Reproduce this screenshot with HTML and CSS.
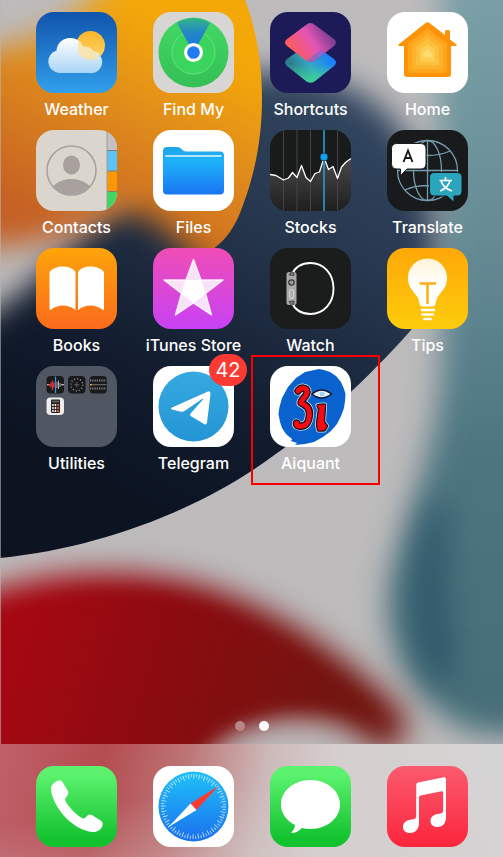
FILE: index.html
```html
<!DOCTYPE html>
<html lang="en">
<head>
<meta charset="utf-8">
<meta name="viewport" content="width=device-width, initial-scale=1">
<title>Home Screen</title>
<link rel="stylesheet" href="styles.css">
</head>
<body>
<div class="screen">
  <svg class="wallpaper" viewBox="0 0 503 857" preserveAspectRatio="none" color-interpolation-filters="sRGB" aria-hidden="true">
    <defs>
      <filter id="b8" filterUnits="userSpaceOnUse" x="-150" y="-150" width="800" height="1150"><feGaussianBlur stdDeviation="9"/></filter>
      <filter id="b14" filterUnits="userSpaceOnUse" x="-150" y="-150" width="800" height="1150"><feGaussianBlur stdDeviation="15"/></filter>
      <filter id="b24" filterUnits="userSpaceOnUse" x="-150" y="-150" width="800" height="1150"><feGaussianBlur stdDeviation="24"/></filter>
      <filter id="b1" filterUnits="userSpaceOnUse" x="-150" y="-150" width="800" height="1150"><feGaussianBlur stdDeviation="1"/></filter>
      <linearGradient id="teal" x1="0" y1="0" x2="0" y2="1"><stop offset="0" stop-color="#7fa3ab"/><stop offset=".4" stop-color="#638a93"/><stop offset=".65" stop-color="#4d7580"/><stop offset="1" stop-color="#466e78"/></linearGradient>
      <linearGradient id="navy" gradientUnits="userSpaceOnUse" x1="370" y1="90" x2="150" y2="500"><stop offset="0" stop-color="#344862"/><stop offset=".4" stop-color="#24344b"/><stop offset=".75" stop-color="#121c2e"/><stop offset="1" stop-color="#0c1422"/></linearGradient>
      <linearGradient id="orange" gradientUnits="userSpaceOnUse" x1="200" y1="40" x2="90" y2="250"><stop offset="0" stop-color="#f4a808"/><stop offset=".4" stop-color="#e08c1c"/><stop offset="1" stop-color="#c45f24"/></linearGradient>
      <linearGradient id="red" gradientUnits="userSpaceOnUse" x1="20" y1="640" x2="330" y2="740"><stop offset="0" stop-color="#a50812"/><stop offset=".5" stop-color="#880c10"/><stop offset="1" stop-color="#721510"/></linearGradient>
      <clipPath id="orangeEdge"><path d="M0 0H245C268 60 268 140 243 205C236 226 226 240 212 250L140 340H0Z"/></clipPath>
      <clipPath id="navyEdge"><path d="M0 0H503V250L412 329C380 365 330 416 273 456C200 510 100 548 0 558Z"/></clipPath>
    </defs>
    <rect width="503" height="857" fill="#bdbbbc"/>
    <path filter="url(#b14)" d="M444 -60H600V715C560 735 500 742 462 728C420 705 387 660 387 602C390 550 428 480 438 400C446 340 436 200 438 120Z" fill="url(#teal)"/>
    <path filter="url(#b14)" d="M432 500C412 540 402 620 425 670C440 700 458 690 450 630C444 590 446 540 445 500Z" fill="#275064" opacity=".8"/>
    <g clip-path="url(#navyEdge)">
      <path filter="url(#b14)" d="M230 75C340 60 400 105 422 170C440 230 440 260 425 400L200 650H-100V352C30 320 60 240 130 190Z" fill="url(#navy)"/>
    </g>
    <g clip-path="url(#orangeEdge)">
      <path filter="url(#b14)" d="M110 -60H350V300H235C190 255 155 205 118 212C90 226 60 252 -100 250V55C50 40 80 30 110 -60Z" fill="url(#orange)"/>
      <path filter="url(#b24)" d="M-60 -60H110L90 0L0 40H-60Z" fill="#bdbbbc" opacity=".7"/>
    </g>
    <path filter="url(#b14)" d="M-100 640C-20 575 80 568 150 575C260 588 345 655 402 710C420 745 380 760 365 740C340 712 260 705 212 748L180 800H-100Z" fill="url(#red)"/>
    <path filter="url(#b8)" d="M-60 655C20 595 100 592 150 595C230 602 320 660 375 712C380 725 365 720 350 712C300 700 250 705 205 740L160 800H-60Z" fill="url(#red)"/>
    <rect width="1" height="857" fill="#b8b6b8" opacity=".6"/>
  </svg>

  <main class="apps">
    <button class="app" type="button">
      <svg class="icon" viewBox="0 0 81 81" aria-hidden="true">
        <defs>
          <linearGradient id="w1" x2="0" y2="1"><stop stop-color="#1054ab"/><stop offset="1" stop-color="#31a0ec"/></linearGradient>
          <linearGradient id="w2" x2="0" y2="1"><stop stop-color="#fff"/><stop offset="1" stop-color="#a9d4f5"/></linearGradient>
          <linearGradient id="w3" x2="0" y2="1"><stop stop-color="#fbb52c"/><stop offset="1" stop-color="#fdd566"/></linearGradient>
          <clipPath id="w4"><circle cx="54.500" cy="33.500" r="14.500"/></clipPath>
        </defs>
        <rect width="81" height="81" fill="url(#w1)"/>
        <circle cx="54.500" cy="33.500" r="14.500" fill="url(#w3)"/>
        <path d="M23 61A11.500 11.500 0 0 1 20.500 38.500C21 31 27 26 34 26C40 26 45 29 47 35C50 34 55 35 57 39A11 11 0 0 1 53 61Z" fill="url(#w2)"/>
        <path d="M42 28C45 30 46 32 47 35C50 34 55 35 57 39C60 40 62 42 63 46L54 49L42 43Z" fill="#fbe3a4" opacity=".85" clip-path="url(#w4)"/>
      </svg>
      <span class="label">Weather</span>
    </button>
    <button class="app" type="button">
      <svg class="icon" viewBox="0 0 81 81" aria-hidden="true">
        <defs><linearGradient id="f1" x2="0" y2="1"><stop stop-color="#43d965"/><stop offset="1" stop-color="#34bf55"/></linearGradient>
        <linearGradient id="f2" x2="0" y2="1"><stop stop-color="#34b587"/><stop offset=".4" stop-color="#2389c4"/><stop offset="1" stop-color="#1e6de8"/></linearGradient></defs>
        <rect width="81" height="81" fill="#d8d5d5"/>
        <circle cx="40.500" cy="40.500" r="35" fill="url(#f1)"/>
        <circle cx="40.500" cy="40.500" r="21.500" fill="#3bd45d" stroke="#63e382" stroke-width="1"/>
        <path d="M40.500 40.500L24 11C33 4.500 48 4.500 57 11Z" fill="url(#f2)"/>
        <circle cx="40.500" cy="40.500" r="9.500" fill="#fff"/><circle cx="40.500" cy="40.500" r="6.300" fill="#1e7bf2"/>
      </svg>
      <span class="label">Find My</span>
    </button>
    <button class="app" type="button">
      <svg class="icon" viewBox="0 0 81 81" aria-hidden="true">
        <defs>
          <linearGradient id="s1" gradientUnits="userSpaceOnUse" x1="24" y1="42" x2="58" y2="20"><stop stop-color="#fb5c5c"/><stop offset=".55" stop-color="#e355b5"/><stop offset="1" stop-color="#7c3f92"/></linearGradient>
          <linearGradient id="s2" gradientUnits="userSpaceOnUse" x1="60" y1="45" x2="24" y2="60"><stop stop-color="#1b80fb"/><stop offset=".55" stop-color="#32a9c4"/><stop offset="1" stop-color="#2d7d8c"/></linearGradient>
          <linearGradient id="s3" gradientUnits="userSpaceOnUse" x1="0" y1="52" x2="0" y2="70"><stop stop-color="#3ed398" stop-opacity="0"/><stop offset="1" stop-color="#3ed398"/></linearGradient>
        </defs>
        <rect width="81" height="81" fill="#1d1b57"/>
        <path d="M36 33.500Q40.500 29 45 33.500L64 47Q68 50.500 64 54L45 69Q40.500 72 36 69L17 54Q13 50.500 17 47Z" fill="url(#s2)"/>
        <path d="M36 33.500Q40.500 29 45 33.500L64 47Q68 50.500 64 54L45 69Q40.500 72 36 69L17 54Q13 50.500 17 47Z" fill="url(#s3)"/>
        <path d="M36 13Q40.500 9 45 13L64 27Q68 30.500 64 34L45 48.500Q40.500 52 36 48.500L17 34Q13 30.500 17 27Z" fill="url(#s1)"/>
        <path d="M51 37.500L57 42L45 49Q40.500 52 36 49Z" fill="#3c72e0" opacity=".45"/>
      </svg>
      <span class="label">Shortcuts</span>
    </button>
    <button class="app" type="button">
      <svg class="icon" viewBox="0 0 81 81" aria-hidden="true">
        <rect width="81" height="81" fill="#fff"/>
        <path d="M38.500 11Q40.500 9.300 42.500 11L58 23V19.500Q58 18 59.500 18H61.500Q63 18 63 19.500V27.500L69.500 32.500Q70 34 68.500 34H64V62Q64 65 61 65H20Q17 65 17 62V34H12Q10.500 34 11.500 32.500Z" fill="#fd9309"/>
        <path d="M40.500 16.500L60 31.500V58Q60 61 57 61H24Q21 61 21 58V31.500Z" fill="#fda51c"/>
        <path d="M40.500 21.500L56 33.500V54.500Q56 57.500 53 57.500H28Q25 57.500 25 54.500V33.500Z" fill="#fdb22b"/>
        <path d="M40.500 26.500L52 35.500V51Q52 53.500 49.500 53.500H31.500Q29 53.500 29 51V35.500Z" fill="#fdc03c"/>
        <path d="M40.500 32L48 38V47.500Q48 49.500 46 49.500H35Q33 49.500 33 47.500V38Z" fill="#fecd52"/>
        <path d="M40.500 37L45 41V45H36V41Z" fill="#fedd70"/>
      </svg>
      <span class="label">Home</span>
    </button>

    <button class="app" type="button">
      <svg class="icon" viewBox="0 0 81 81" aria-hidden="true">
        <rect width="81" height="81" fill="#dad6cd"/>
        <rect x="71" width="10" height="20.500" fill="#c4c1c4"/><rect x="71" y="20.500" width="10" height="20.500" fill="#5bc3f6"/><rect x="71" y="41" width="10" height="20.500" fill="#fd9804"/><rect x="71" y="61.500" width="10" height="20" fill="#41d663"/>
        <path d="M71 20.500H81M71 41H81M71 61.500H81" stroke="#7c8072" stroke-width="1"/><path d="M71 0V81" stroke="#a09c98" stroke-width="1"/>
        <clipPath id="c1"><circle cx="35.500" cy="40.500" r="24"/></clipPath>
        <circle cx="35.500" cy="40.500" r="24.500" fill="none" stroke="#a8a09d" stroke-width="1.600"/>
        <ellipse cx="35.500" cy="35" rx="8.500" ry="9.500" fill="#a8a09d"/><ellipse cx="35.500" cy="65" rx="22" ry="16" fill="#a8a09d" clip-path="url(#c1)"/>
      </svg>
      <span class="label">Contacts</span>
    </button>
    <button class="app" type="button">
      <svg class="icon" viewBox="0 0 81 81" aria-hidden="true">
        <defs><linearGradient id="fi" x2="0" y2="1"><stop stop-color="#1ea5e8"/><stop offset=".3" stop-color="#1db3fa"/><stop offset="1" stop-color="#1b75f3"/></linearGradient></defs>
        <rect width="81" height="81" fill="#fff"/>
        <path d="M10 21Q10 17 14 17H24Q26.500 17 28.500 19L30 20.500Q31.500 21.500 33.500 21.500H67Q71 21.500 71 25.500V60.500Q71 64.500 67 64.500H14Q10 64.500 10 60.500Z" fill="url(#fi)"/>
        <path d="M13 26H68" stroke="#e8f7ff" stroke-width="1.600" stroke-linecap="round"/>
      </svg>
      <span class="label">Files</span>
    </button>
    <button class="app" type="button">
      <svg class="icon" viewBox="0 0 81 81" aria-hidden="true">
        <defs><linearGradient id="st" x2="0" y2="1"><stop stop-color="#4a4a4a"/><stop offset="1" stop-color="#1e1e1e"/></linearGradient></defs>
        <rect width="81" height="81" fill="#191a1a"/>
        <path d="M0 44.500L6 45.500L13.500 50L18.500 48L22.500 42.500L27 47.500L31.500 35.500L36 47.500L40.500 51.500L45 43.500L49.500 42L54 27.500L58.500 39.500L63 36.500L67.500 48.500L71.500 37L76 32L81 28.500V81H0Z" fill="url(#st)"/>
        <path d="M13.500 0V81M27 0V81M40.500 0V81M67.500 0V81" stroke="#444" stroke-width="1"/>
        <path d="M0 44.500L6 45.500L13.500 50L18.500 48L22.500 42.500L27 47.500L31.500 35.500L36 47.500L40.500 51.500L45 43.500L49.500 42L54 27.500L58.500 39.500L63 36.500L67.500 48.500L71.500 37L76 32L81 28.500" fill="none" stroke="#fff" stroke-width="1.300" stroke-linejoin="round"/>
        <path d="M54 0V81" stroke="#2597cc" stroke-width="1.700"/><circle cx="54" cy="27" r="4" fill="#16a0f5" stroke="#15303f" stroke-width=".8"/>
      </svg>
      <span class="label">Stocks</span>
    </button>
    <button class="app" type="button">
      <svg class="icon" viewBox="0 0 81 81" aria-hidden="true">
        <rect width="81" height="81" fill="#191a1c"/>
        <g fill="none" stroke="#739cae" stroke-width="1.300"><circle cx="40.500" cy="40.500" r="30"/><ellipse cx="40.500" cy="40.500" rx="14" ry="30"/><path d="M40.500 10.500V70.500M10.500 40.500H70.500M18 21C31 27 50 27 63 21M18 60C31 54 50 54 63 60"/></g>
        <path d="M10 13.500H33.500Q39 13.500 39 19V33.500Q39 39 33.500 39H20L14.500 44.500Q13.500 45 13.500 43.500V39H10Q4.500 39 4.500 33.500V19Q4.500 13.500 10 13.500Z" fill="#fff" stroke="#191a1c"/>
        <path d="M47.500 42.500H70Q75 42.500 75 47.500V61Q75 66 70 66H67V70.500Q66.500 72 65.500 71L60 66H47.500Q42.500 66 42.500 61V47.500Q42.500 42.500 47.500 42.500Z" fill="#2ba5bd" stroke="#191a1c"/>
        <path d="M16.500 32L21 20.500L25.500 32M18 28H24" fill="none" stroke="#19191b" stroke-width="1.900"/>
        <path d="M58.500 47V50M52.500 50.500H65M63 50.500C62 55 58 59 53 61M54 50.500C55 55 59 59 65 61" fill="none" stroke="#fff" stroke-width="1.600"/>
      </svg>
      <span class="label">Translate</span>
    </button>

    <button class="app" type="button">
      <svg class="icon" viewBox="0 0 81 81" aria-hidden="true">
        <defs><linearGradient id="bk" x2="0" y2="1"><stop stop-color="#fea40a"/><stop offset="1" stop-color="#fb6a1c"/></linearGradient></defs>
        <rect width="81" height="81" fill="url(#bk)"/>
        <path d="M13.500 24Q18 18.500 27 18.500Q36 18.500 39.500 24V62Q34 57.500 27 57.500Q20 57.500 14.500 62Q13.500 62 13.500 61Z" fill="#fff"/>
        <path d="M42 24Q45.500 18.500 54.500 18.500Q63.500 18.500 68 24V61Q68 62 67 62Q61 57.500 54.500 57.500Q47.500 57.500 42 62Z" fill="#fff"/>
      </svg>
      <span class="label">Books</span>
    </button>
    <button class="app" type="button">
      <svg class="icon" viewBox="0 0 81 81" aria-hidden="true">
        <defs><linearGradient id="it" x2="0" y2="1"><stop stop-color="#f04db5"/><stop offset="1" stop-color="#c742f5"/></linearGradient></defs>
        <rect width="81" height="81" fill="url(#it)"/>
        <path d="M40.500 11.500L48 32H70L52.500 45.500L58.500 67L40.500 55L22.500 67L28.500 45.500L11 32H33Z" fill="#fff" fill-opacity=".84" stroke="#fff" stroke-opacity=".84" stroke-width="1.500" stroke-linejoin="round"/>
        <path d="M33 32H48L53 45.500L40.500 55L28 45.500Z" fill="#fff"/>
      </svg>
      <span class="label">iTunes Store</span>
    </button>
    <button class="app" type="button">
      <svg class="icon" viewBox="0 0 81 81" aria-hidden="true">
        <rect width="81" height="81" fill="#1b1c1c"/>
        <path d="M21.500 27C25 19 32 15 40.500 15C54 15 63.500 26 63.500 40.500C63.500 55 54 66 40.500 66C32 66 25 62 21.500 54" fill="none" stroke="#fff" stroke-width="1.900"/>
        <rect x="16.500" y="24" width="10" height="33" rx="2.500" fill="#aaa9a9"/>
        <circle cx="21.500" cy="34.500" r="2.700" fill="#999" stroke="#393939" stroke-width="1.200"/><rect x="19.700" y="41.500" width="4" height="9" rx="2" fill="none" stroke="#e0e0e0"/>
        <path d="M19 27L21 23.500L24 25V27.500ZM19 53.500L24 53V56L21.500 57.500Z" fill="#777" stroke="#333" stroke-width=".7"/>
      </svg>
      <span class="label">Watch</span>
    </button>
    <button class="app" type="button">
      <svg class="icon" viewBox="0 0 81 81" aria-hidden="true">
        <defs><linearGradient id="ti" x2="0" y2="1"><stop stop-color="#fea808"/><stop offset="1" stop-color="#fdcc0b"/></linearGradient><linearGradient id="tj" x2="0" y2="1"><stop stop-color="#fff3d8"/><stop offset=".55" stop-color="#fff"/><stop offset="1" stop-color="#fff"/></linearGradient></defs>
        <rect width="81" height="81" fill="url(#ti)"/>
        <path d="M40.500 10.500C51.500 10.500 60 19 60 30C60 38 56 42 52 47C49.500 50 49 53 48.500 56Q48 58.500 45.500 58.500H35.500Q33 58.500 32.500 56C32 53 31.500 50 29 47C25 42 21 38 21 30C21 19 29.500 10.500 40.500 10.500Z" fill="url(#tj)"/>
        <path d="M32.500 35.500H49M40.500 35.500V56" stroke="#fcae16" stroke-width="2.500"/>
        <path d="M35 62H47M35.500 66.500H46M37.500 71H43.500" stroke="#fff" stroke-width="2.600" stroke-linecap="round"/>
      </svg>
      <span class="label">Tips</span>
    </button>

    <button class="app" type="button">
      <svg class="icon" viewBox="0 0 81 81" aria-hidden="true">
        <rect width="81" height="81" fill="#515762"/>
        <g fill="#191a1b"><rect x="10.500" y="10" width="17.500" height="17.500" rx="4"/><rect x="32" y="10" width="17.500" height="17.500" rx="4"/><rect x="53.500" y="10" width="17.500" height="17.500" rx="4"/></g>
        <path d="M11 18.800H14M25 18.800H28" stroke="#e8e8e8"/><path d="M13.500 18V20M15 16.500V21.500M16.500 14.500V24M18 16.500V21.500" stroke="#e53037" stroke-width="1.300"/><path d="M21 16V22M22.500 14.500V23M24 17V21" stroke="#bbb" stroke-width=".9"/><path d="M19.500 10.500V27" stroke="#3197d5" stroke-width="1.300"/>
        <circle cx="40.800" cy="18.800" r="6" fill="none" stroke="#aaa" stroke-width="1.200" stroke-dasharray="1 2.100"/><path d="M40.800 16V21.500M38 18.800H43.500" stroke="#777" stroke-width=".7"/>
        <path d="M54 14.500H70.500M54 22.500H70.500" stroke="#999" stroke-width="2" stroke-dasharray=".8 1"/><path d="M54 18.700H70.500" stroke="#777"/><path d="M54 18.700H56" stroke="#d89c30" stroke-width="1.500"/>
        <rect x="10.500" y="31.500" width="17.500" height="17.500" rx="4" fill="#efeceb"/><rect x="15" y="33.500" width="9" height="13.500" rx="1" fill="#292425"/>
        <path d="M16.200 39H20.300M16.200 42H20.300M16.200 45H20.300" stroke="#eee" stroke-width="1.800" stroke-dasharray="1.500 1"/><path d="M21.200 39H23M21.200 42H23M21.200 45H23" stroke="#e65c35" stroke-width="1.800"/><path d="M16.200 35.500H23" stroke="#666" stroke-width="1.500"/>
      </svg>
      <span class="label">Utilities</span>
    </button>
    <button class="app" type="button">
      <svg class="icon" viewBox="0 0 81 81" aria-hidden="true">
        <defs><linearGradient id="te" x2="0" y2="1"><stop stop-color="#36a9e1"/><stop offset="1" stop-color="#2495d4"/></linearGradient></defs>
        <rect width="81" height="81" fill="#fff"/><circle cx="40.500" cy="40.500" r="35" fill="url(#te)"/>
        <path d="M19 41.500L55 25.500Q57.500 24.800 57.500 28L54 56.500Q53.500 59.500 51 58L38.500 50.500Q36 49 38 47L50 33.500Q50.500 32 49 33L31.500 45Q29.500 46.300 27 45.500L19 43.500Q17 42.500 19 41.500Z" fill="#fff"/>
      </svg>
      <span class="badge">42</span>
      <span class="label">Telegram</span>
    </button>
    <button class="app app-marked" type="button">
      <svg class="icon" viewBox="0 0 81 81" aria-hidden="true">
        <rect width="81" height="81" fill="#fff"/>
        <path d="M49 3L54 4L60 6L66 10L71 16L74 23L75.500 28L75 35L74 42L71 50L67 58L61 65L53 71L44 76L35 78L25 79L27 77L21 75L22 73L16 68L12 62L10 56L8.500 48L9.500 41L12 32L18 21L26 12L35 6L42 4.500Z" fill="#0a62cf"/>
        <g fill="none" stroke-linecap="round" stroke-linejoin="round">
          <path d="M28 25C31 21 37 21 37 26C37 31 31 33 31 37C36.500 39 40 43 39.500 49C39 56 36 60 32 60C28 61 26 59 26.500 57" stroke="#d5e7f4" stroke-width="9"/>
          <path d="M28 25C31 21 37 21 37 26C37 31 31 33 31 37C36.500 39 40 43 39.500 49C39 56 36 60 32 60C28 61 26 59 26.500 57" stroke="#170e1b" stroke-width="7.500"/>
          <path d="M28 25C31 21 37 21 37 26C37 31 31 33 31 37C36.500 39 40 43 39.500 49C39 56 36 60 32 60C28 61 26 59 26.500 57" stroke="#f30a12" stroke-width="5"/>
          <path d="M48 39.500L54.500 39L53.500 56L56.500 60L54 64L48.500 64L47.500 58L49.500 43Z" fill="#d5e7f4" stroke="#d5e7f4" stroke-width="5"/>
          <path d="M48 39.500L54.500 39L53.500 56L56.500 60L54 64L48.500 64L47.500 58L49.500 43Z" fill="#170e1b" stroke="#170e1b" stroke-width="3.500"/>
          <path d="M48 39.500L54.500 39L53.500 56L56.500 60L54 64L48.500 64L47.500 58L49.500 43Z" fill="#f30a12" stroke="#f30a12" stroke-width="1"/>
        </g>
        <path d="M42 28Q51.500 20 61.500 28Q51.500 36 42 28Z" fill="#e4f1fa" stroke="#161629" stroke-width="1.500"/><circle cx="52" cy="28" r="2.500" fill="#a3cfee"/>
      </svg>
      <span class="label">Aiquant</span>
    </button>
  </main>

  <div class="pages" role="group" aria-label="Pages">
    <span class="dot"></span><span class="dot dot-current"></span>
  </div>

  <nav class="dock" aria-label="Dock">
    <button class="app" type="button" aria-label="Phone">
      <svg class="icon" viewBox="0 0 81 81" aria-hidden="true">
        <defs><linearGradient id="gr" x2="0" y2="1"><stop offset=".1" stop-color="#5cf26e"/><stop offset=".9" stop-color="#13c22f"/></linearGradient></defs>
        <rect width="81" height="81" fill="url(#gr)"/>
        <path d="M21.500 14.800Q24.500 13 26.500 16L32 25Q33.300 27.500 31.500 29.500L29.500 32Q28.500 34 30 36C34 42.500 40 48.500 46 52Q48 53 49.500 51.500L51.500 49.500Q53.500 47.700 56 49L64.500 54.500Q67.500 56.500 66.500 59.500C65 64 61 66.500 56 66C48 65 39 60.500 31 53C22 44 15.500 32 15 23C15 19 18 16.500 21.500 14.800Z" fill="#fff"/>
      </svg>
    </button>
    <button class="app" type="button" aria-label="Safari">
      <svg class="icon" viewBox="0 0 81 81" aria-hidden="true">
        <defs><linearGradient id="sa" x2="0" y2="1"><stop stop-color="#1fc1f8"/><stop offset="1" stop-color="#1b70ee"/></linearGradient></defs>
        <rect width="81" height="81" fill="#fff"/><circle cx="40.500" cy="40.500" r="35" fill="url(#sa)"/>
        <circle cx="40.500" cy="40.500" r="30" fill="none" stroke="#d9f1ff" stroke-width="5" stroke-dasharray=".9 4.423" pathLength="191.640" opacity=".9"/>
        <circle cx="40.500" cy="40.500" r="31" fill="none" stroke="#d9f1ff" stroke-width="3" stroke-dasharray=".9 4.423" stroke-dashoffset="2.660" pathLength="191.640" opacity=".8"/>
        <path d="M65.500 20L43.500 44L37.500 37.500Z" fill="#fb3b30"/><path d="M15.500 61L37.500 37.500L43.500 44Z" fill="#fff"/>
      </svg>
    </button>
    <button class="app" type="button" aria-label="Messages">
      <svg class="icon" viewBox="0 0 81 81" aria-hidden="true">
        <rect width="81" height="81" fill="url(#gr)"/>
        <path d="M40.500 14C57 14 70 25 70 38.500C70 52 57 63 40.500 63Q36 63 32 62C29 65 25.500 67 21.500 67Q21 66.500 22 65.500C24 63.500 25 61 25 59C16 54.500 11 47 11 38.500C11 25 24 14 40.500 14Z" fill="#fff"/>
      </svg>
    </button>
    <button class="app" type="button" aria-label="Music">
      <svg class="icon" viewBox="0 0 81 81" aria-hidden="true">
        <defs><linearGradient id="mu" x2="0" y2="1"><stop stop-color="#fb5b6e"/><stop offset="1" stop-color="#fb253c"/></linearGradient></defs>
        <rect width="81" height="81" fill="url(#mu)"/>
        <path d="M31 16.500L57 11.200Q59 11 59 13V51C59 57 56 61 50.500 61C46 61 43.500 58.500 43.500 55C43.500 51 46.500 48.500 51 48C55 47.500 56.200 47 56.200 44V26.500Q56.200 25 54.500 25.200L33.500 29.500Q32 29.800 32 31.500V57C32 63 28.500 67 23 67C18.500 67 16 64.500 16 61C16 57 19 54.500 23.500 53.800C28 53 29.200 52.500 29.200 49.500V19Q29.200 17 31 16.500Z" fill="#fff"/>
      </svg>
    </button>
  </nav>
</div>
</body>
</html>
```
FILE: styles.css
```css
* {
  box-sizing: border-box;
}

body {
  margin: 0;
  font-family: Inter, "Liberation Sans", sans-serif;
  color: #fff;
}

.screen {
  position: relative;
  display: flex;
  flex-direction: column;
  min-height: 100vh;
  overflow: hidden;
}

.wallpaper {
  position: absolute;
  inset: 0;
  width: 100%;
  height: 100%;
  z-index: -1;
}

.apps,
.dock {
  display: grid;
  grid-template-columns: repeat(4, 1fr);
}

.apps {
  padding: 12px 17px 0 18px;
  row-gap: 11px;
}

.app {
  position: relative;
  display: flex;
  flex-direction: column;
  align-items: center;
  gap: 6px;
  padding: 0;
  border: 0;
  background: none;
  color: inherit;
  font: inherit;
  cursor: pointer;
}

.icon {
  display: block;
  width: 81px;
  height: 81px;
  border-radius: 18px;
}

.label {
  font-size: 16px;
  font-weight: 500;
  line-height: 20px;
  white-space: nowrap;
}

.badge {
  position: absolute;
  top: -12px;
  right: 5px;
  min-width: 38px;
  height: 32px;
  border-radius: 16px;
  background: #fb3b33;
  font-size: 20px;
  line-height: 32px;
  text-align: center;
}

/* Highlight frame around a single app */
.app-marked::after {
  content: "";
  position: absolute;
  inset: -11px -11px -12px -1px;
  border: 2px solid #f80000;
}

.pages {
  display: flex;
  justify-content: center;
  gap: 14px;
  margin-top: auto;
  padding: 13px 0;
}

.dot {
  width: 10px;
  height: 10px;
  border-radius: 50%;
  background: #b98687;
}

.dot-current {
  background: #fff;
}

.dock {
  padding: 22px 17px 10px 18px;
  background:
    linear-gradient(170deg, transparent 40%, rgba(214, 208, 208, 0.5) 100%),
    linear-gradient(100deg, #c0606a 0%, #b44c50 20%, #bd7475 36%, #cdbaba 52%, #d5cecd 64%, #d5d5d6 100%);
}
```
